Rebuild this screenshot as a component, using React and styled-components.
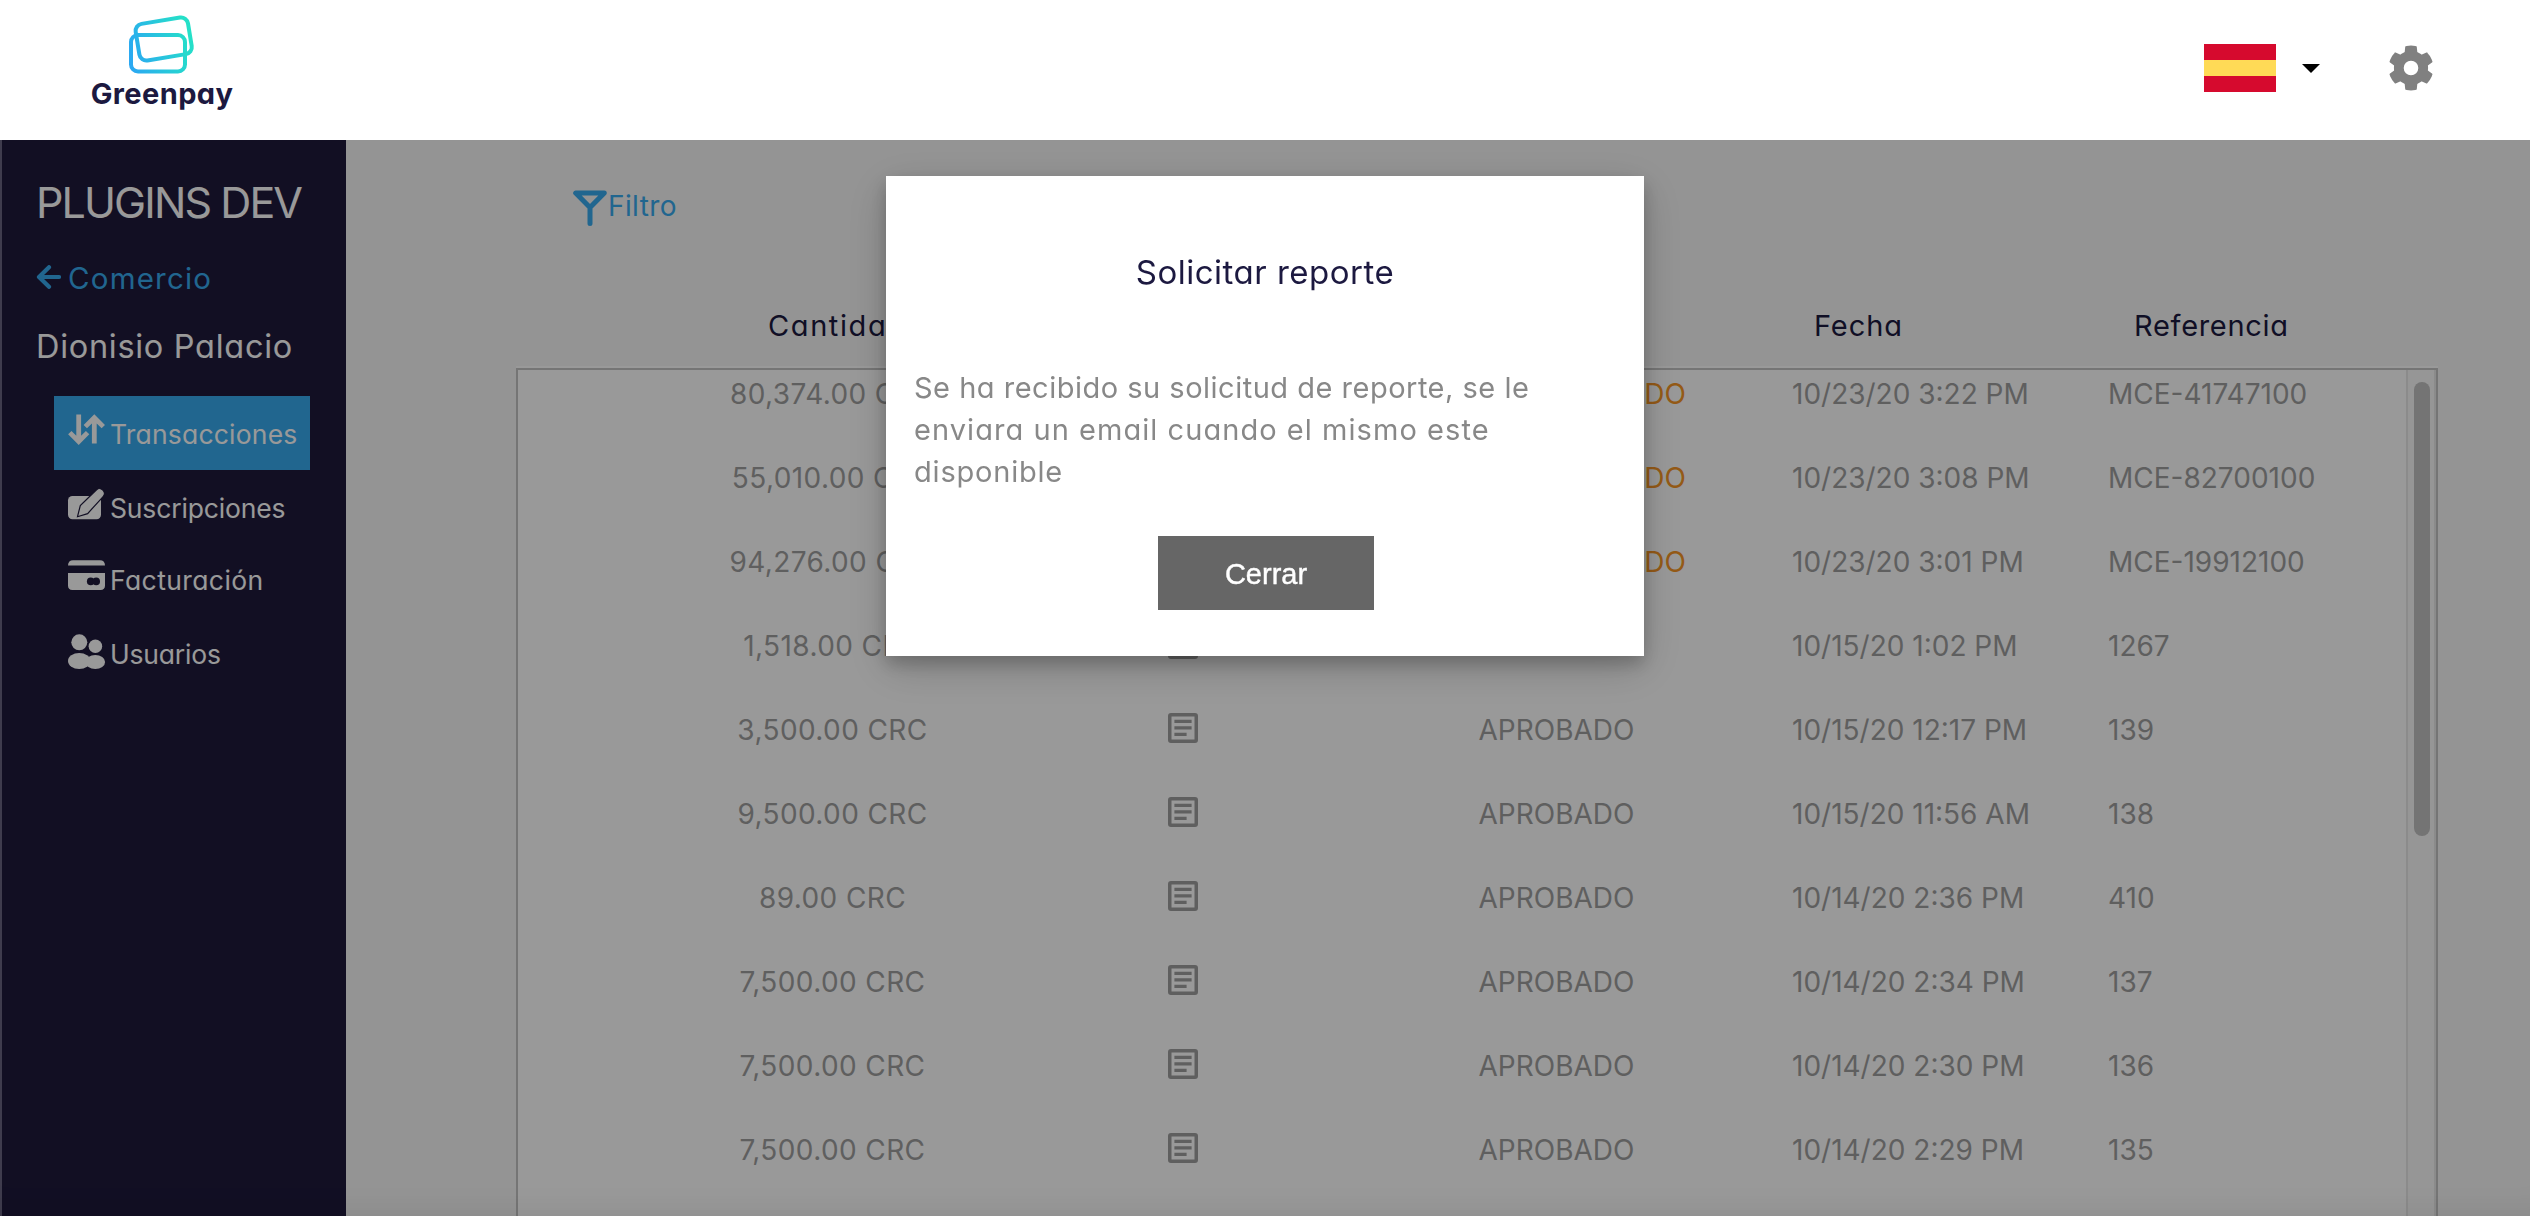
import React from 'react';
import styled, { createGlobalStyle } from 'styled-components';

const GlobalStyle = createGlobalStyle`
  * {
    box-sizing: border-box;
  }

  body {
    margin: 0;
    overflow: hidden;
    font-family: Inter, 'Open Sans', sans-serif;
    font-feature-settings: 'cv11';
    background: #f7f7f7;
  }
`;

const Page = styled.div`
  display: flex;
  flex-direction: column;
  height: 1216px;
  overflow: hidden;
  white-space: nowrap;
`;

const HeaderBar = styled.header`
  display: flex;
  justify-content: space-between;
  height: 140px;
  flex-shrink: 0;
  padding: 0 97px 0 92px;
  background: #fff;
`;

const Brand = styled.div`
  display: flex;
  flex-direction: column;
  align-items: center;
  width: 140px;
  padding-top: 14px;
`;

const BrandName = styled.div`
  margin-top: 3px;
  font-size: 29px;
  line-height: 34px;
  font-weight: 700;
  letter-spacing: 0.4px;
  color: #1c1940;
`;

const HeaderActions = styled.div`
  display: flex;
  align-items: center;
  height: 136px;
`;

const Flag = styled.div`
  width: 72px;
  height: 48px;
  border: solid #d60a2e;
  border-width: 16px 0;
  background: #ffda56;
`;

const Caret = styled.div`
  margin: 0 69px 0 26px;
  border: 9px solid transparent;
  border-top-color: #000;
  border-bottom: 0;
`;

const Body = styled.div`
  display: flex;
  flex: 1;
  min-height: 0;
`;

const Sidebar = styled.aside`
  width: 346px;
  flex-shrink: 0;
  padding: 37px 36px 0 34px;
  border-left: 2px solid #696480;
  background: #1e193b;
  color: #fff;
`;

const Company = styled.div`
  font-size: 43px;
  line-height: 50px;
  letter-spacing: -1.9px;
`;

const BackLink = styled.a`
  display: flex;
  align-items: flex-start;
  margin-top: 30px;
  font-size: 29.5px;
  line-height: 42px;
  letter-spacing: 1.2px;
  color: #37aaee;

  svg {
    margin: 8px 7px 0 0;
  }
`;

const UserName = styled.div`
  margin-top: 27px;
  font-size: 32.5px;
  line-height: 42px;
  letter-spacing: 0.7px;
`;

const Nav = styled.nav`
  margin: 28px 0 0 18px;
`;

const NavItem = styled.div`
  display: flex;
  align-items: flex-start;
  width: 256px;
  height: ${({ $height }) => $height || 74}px;
  padding: 18px 0 0 14px;
  background: ${({ $active }) => ($active ? '#37aaee' : 'transparent')};

  svg {
    flex-shrink: 0;
    overflow: visible;
  }
`;

const NavLabel = styled.span`
  padding: 1px 0 0 4px;
  font-size: 26.5px;
  line-height: 38px;
  letter-spacing: ${({ $spacing }) => $spacing || 0}px;
`;

const Main = styled.main`
  display: flex;
  flex-direction: column;
  flex: 1;
  padding: 0 92px 0 170px;
`;

const FilterButton = styled.div`
  display: flex;
  align-items: flex-start;
  height: 165px;
  padding: 45px 0 0 57px;
  font-size: 28px;
  line-height: 42px;
  letter-spacing: 0.4px;
  color: #37aaee;

  svg {
    margin: 5px 1px 0 0;
  }
`;

const Columns = styled.div`
  display: grid;
  grid-template-columns: 423px 277px 471px 316px 1fr;
`;

const TableHead = styled(Columns)`
  height: 63px;
  padding-left: 105px;
  font-size: 29px;
  line-height: 42px;
  color: #1c1940;
`;

const HeadCell = styled.div`
  padding-left: ${({ $indent }) => $indent || 0}px;
  text-align: ${({ $center }) => ($center ? 'center' : 'left')};
  letter-spacing: ${({ $spacing }) => $spacing || 0.7}px;
`;

const TableBox = styled.div`
  display: flex;
  flex: 1;
  min-height: 0;
  overflow: hidden;
  border: 2px solid #c4c4c4;
  border-bottom: 0;
  background: #fff;
  box-shadow: 0 -2px 0 #fff;
`;

const Rows = styled.div`
  flex: 1;
  margin-top: -18px;
`;

const Row = styled(Columns)`
  height: 84px;
  padding-left: 103px;
  font-size: 28px;
  line-height: 84px;
  color: #9f9f9f;
`;

const Cell = styled.div`
  text-align: ${({ $center }) => ($center ? 'center' : 'left')};
  letter-spacing: ${({ $spacing }) => $spacing || 0}px;

  svg {
    display: block;
    margin: 25px auto 0;
  }
`;

const StatusCell = styled(Cell)`
  padding-left: ${({ $warning }) => ($warning ? 26 : 0)}px;
  text-align: center;
  color: ${({ $warning }) => ($warning ? '#f79626' : 'inherit')};
`;

const ScrollTrack = styled.div`
  width: 30px;
  padding: 12px 0 0 6px;
  border: solid #e8e8e8;
  border-width: 0 2px;
  background: #fafafa;
`;

const ScrollThumb = styled.div`
  width: 16px;
  height: 454px;
  border-radius: 8px;
  background: #c1c1c1;
`;

const Overlay = styled.div`
  position: fixed;
  top: 140px;
  right: 0;
  bottom: 0;
  left: 0;
  display: flex;
  align-items: flex-start;
  justify-content: center;
  padding-top: 36px;
  overflow: hidden;
  background: rgba(0, 0, 0, 0.4);
  box-shadow: inset 0 -40px 40px -40px rgba(0, 0, 0, 0.1);
`;

const Modal = styled.section`
  display: flex;
  flex-direction: column;
  align-items: center;
  width: 758px;
  height: 480px;
  padding: 0 28px;
  background: #fff;
  box-shadow: 0 8px 16px rgba(0, 0, 0, 0.2), 0 12px 40px rgba(0, 0, 0, 0.19);
`;

const ModalTitle = styled.h2`
  margin: 72px 0 0;
  font-size: 33px;
  line-height: 48px;
  font-weight: 400;
  letter-spacing: 0.5px;
  color: #1c1940;
`;

const ModalText = styled.p`
  width: 100%;
  margin: 71px 0 0;
  font-size: 29px;
  line-height: 42px;
  color: #888;
`;

const TextLine = styled.span`
  display: block;
  letter-spacing: ${({ $spacing }) => $spacing || 0}px;
`;

const CloseButton = styled.button`
  width: 216px;
  height: 74px;
  margin: 43px 0 0 2px;
  padding: 2px 0 0;
  border: 0;
  background: #666;
  color: #fff;
  font: 29px 'Liberation Sans', Arial, sans-serif;
  -webkit-text-stroke: 0.4px #fff;
`;

const LogoIcon = () => (
  <svg width="68" height="60" viewBox="0 0 68 60" fill="none" stroke="url(#brand)" strokeWidth="4">
    <defs>
      <linearGradient id="brand" gradientUnits="userSpaceOnUse" x1="0" y1="40" x2="62" y2="26">
        <stop offset="0" stopColor="#2ba8f2" />
        <stop offset="1" stopColor="#25e0c8" />
      </linearGradient>
    </defs>
    <rect x="9.2" y="6.5" width="53" height="37" rx="7" transform="rotate(-9.3 35.7 25)" />
    <rect x="3" y="21" width="54" height="36.5" rx="7" />
  </svg>
);

const GearIcon = () => (
  <svg width="44" height="46" viewBox="-22 -23 44 46" fill="#808080">
    <defs>
      <clipPath id="gear">
        <circle r="22.4" />
      </clipPath>
    </defs>
    <g clipPath="url(#gear)">
      {[0, 60, 120].map(angle => (
        <path key={angle} d="M-5.6-23H5.6L6.4-15V-8H-6.4V-15ZM-5.6 23H5.6L6.4 15V8H-6.4V15Z" transform={`rotate(${angle})`} />
      ))}
      <circle r="12.2" fill="none" stroke="#808080" strokeWidth="9.8" />
    </g>
  </svg>
);

const BackIcon = () => (
  <svg width="25" height="24" viewBox="0 0 25 24" fill="none" stroke="currentColor" strokeWidth="4.2" strokeLinecap="round">
    <path d="M13 2.2L3 12l10 9.8" strokeLinejoin="round" />
    <path d="M4 12h19" />
  </svg>
);

const TransferIcon = () => (
  <svg width="38" height="32" viewBox="0 0 38 32" fill="none" stroke="#fff" strokeWidth="4.8">
    <path d="M10.7.5V27M1.8 18.6l8.9 8.9 8.9-8.9M26.3 29.5V4M17.3 12.6l9-8.9 9 8.9" />
  </svg>
);

const EditIcon = () => (
  <svg width="38" height="32" viewBox="0 -1 38 32" fill="#fff">
    <rect y="7" width="33" height="23.3" rx="4.5" />
    <path
      d="M9.5 27.7l2.8-11.2L28.3 1a4.7 4.7 0 0 1 6.6.2 4.7 4.7 0 0 1 0 6.6L19.6 24.6Z"
      stroke="#1e193b"
      strokeWidth="1.2"
    />
  </svg>
);

const CardIcon = () => (
  <svg width="38" height="32" viewBox="0 0 38 32" fill="#fff">
    <path d="M0 5.6C0 2 2 .2 5 .2h27c3 0 5 1.8 5 5.4ZM0 13h37v12.5c0 3-1.5 4.4-4.4 4.4H4.4C1.5 29.9 0 28.5 0 25.5Z" />
    <circle cx="22.7" cy="21.4" r="3.8" fill="#1e193b" />
    <circle cx="28.2" cy="21.4" r="3.8" fill="#1e193b" />
  </svg>
);

const UsersIcon = () => (
  <svg width="38" height="36" viewBox="0 0 38 36" fill="#fff">
    <circle cx="11.3" cy="8.3" r="8" />
    <circle cx="27.4" cy="12.2" r="6.8" />
    <ellipse cx="11.2" cy="27" rx="11.2" ry="8" />
    <ellipse cx="27.3" cy="28" rx="9.8" ry="7" />
  </svg>
);

const FilterIcon = () => (
  <svg width="34" height="36" viewBox="0 0 34 36" fill="none" stroke="currentColor" strokeWidth="5" strokeLinecap="round" strokeLinejoin="round">
    <path d="M2.7 3h28.6L17 17.5ZM17 17.5v16" />
  </svg>
);

const DetailIcon = () => (
  <svg width="30" height="30" viewBox="0 0 30 30" fill="#9f9f9f">
    <path
      fillRule="evenodd"
      d="M3 0h24a3 3 0 0 1 3 3v24a3 3 0 0 1-3 3H3a3 3 0 0 1-3-3V3a3 3 0 0 1 3-3Zm.5 3.5v23h23v-23Z"
    />
    <path d="M6.4 6.7h17.2V10H6.4ZM6.4 13.2h17.2v3.3H6.4ZM6.4 19.7h12.2V23H6.4Z" />
  </svg>
);

const navItems = [
  { label: 'Transacciones', Icon: TransferIcon, active: true, spacing: 0.2 },
  { label: 'Suscripciones', Icon: EditIcon, height: 72, spacing: -0.15 },
  { label: 'Facturación', Icon: CardIcon, spacing: 0.4 },
  { label: 'Usuarios', Icon: UsersIcon, spacing: -0.2 },
];

const transactions = [
  { amount: '80,374.00 CRC', status: 'NO AUTORIZADO', date: '10/23/20 3:22 PM', reference: 'MCE-41747100' },
  { amount: '55,010.00 CRC', status: 'NO AUTORIZADO', date: '10/23/20 3:08 PM', reference: 'MCE-82700100' },
  { amount: '94,276.00 CRC', status: 'NO AUTORIZADO', date: '10/23/20 3:01 PM', reference: 'MCE-19912100' },
  { amount: '1,518.00 CRC', status: 'APROBADO', date: '10/15/20 1:02 PM', reference: '1267' },
  { amount: '3,500.00 CRC', status: 'APROBADO', date: '10/15/20 12:17 PM', reference: '139' },
  { amount: '9,500.00 CRC', status: 'APROBADO', date: '10/15/20 11:56 AM', reference: '138' },
  { amount: '89.00 CRC', status: 'APROBADO', date: '10/14/20 2:36 PM', reference: '410' },
  { amount: '7,500.00 CRC', status: 'APROBADO', date: '10/14/20 2:34 PM', reference: '137' },
  { amount: '7,500.00 CRC', status: 'APROBADO', date: '10/14/20 2:30 PM', reference: '136' },
  { amount: '7,500.00 CRC', status: 'APROBADO', date: '10/14/20 2:29 PM', reference: '135' },
];

const Header = () => (
  <HeaderBar>
    <Brand>
      <LogoIcon />
      <BrandName>Greenpay</BrandName>
    </Brand>
    <HeaderActions>
      <Flag />
      <Caret />
      <GearIcon />
    </HeaderActions>
  </HeaderBar>
);

const SideMenu = () => (
  <Sidebar>
    <Company>PLUGINS DEV</Company>
    <BackLink>
      <BackIcon />
      Comercio
    </BackLink>
    <UserName>Dionisio Palacio</UserName>
    <Nav>
      {navItems.map(({ label, Icon, active, height, spacing }) => (
        <NavItem key={label} $active={active} $height={height}>
          <Icon />
          <NavLabel $spacing={spacing}>{label}</NavLabel>
        </NavItem>
      ))}
    </Nav>
  </Sidebar>
);

const Transactions = () => (
  <Main>
    <FilterButton>
      <FilterIcon />
      Filtro
    </FilterButton>
    <TableHead>
      <HeadCell $indent={147} $spacing={1.6}>Cantidad</HeadCell>
      <HeadCell $center>Detalle</HeadCell>
      <HeadCell $center>Estado</HeadCell>
      <HeadCell $indent={22} $spacing={0.9}>Fecha</HeadCell>
      <HeadCell $indent={26}>Referencia</HeadCell>
    </TableHead>
    <TableBox>
      <Rows>
        {transactions.map(({ amount, status, date, reference }) => (
          <Row key={date}>
            <Cell $center $spacing={0.4}>{amount}</Cell>
            <Cell><DetailIcon /></Cell>
            <StatusCell $warning={status !== 'APROBADO'}>{status}</StatusCell>
            <Cell>{date}</Cell>
            <Cell>{reference}</Cell>
          </Row>
        ))}
      </Rows>
      <ScrollTrack>
        <ScrollThumb />
      </ScrollTrack>
    </TableBox>
  </Main>
);

const ReportModal = () => (
  <Overlay>
    <Modal>
      <ModalTitle>Solicitar reporte</ModalTitle>
      <ModalText>
        <TextLine $spacing={0.5}>Se ha recibido su solicitud de reporte, se le</TextLine>
        <TextLine $spacing={1.05}>enviara un email cuando el mismo este</TextLine>
        <TextLine $spacing={0.8}>disponible</TextLine>
      </ModalText>
      <CloseButton>Cerrar</CloseButton>
    </Modal>
  </Overlay>
);

const App = () => (
  <Page>
    <GlobalStyle />
    <Header />
    <Body>
      <SideMenu />
      <Transactions />
    </Body>
    <ReportModal />
  </Page>
);

export default App;
